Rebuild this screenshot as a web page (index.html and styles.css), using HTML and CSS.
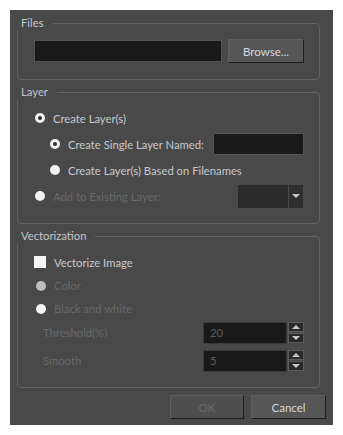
FILE: index.html
```html
<!DOCTYPE html>
<html lang="en">
<head>
    <meta charset="UTF-8">
    <title>Import Images</title>
    <link rel="stylesheet" href="styles.css">
</head>
<body>
    <div class="dialog">
        <!-- Files -->
        <div class="group files-group">
            <span class="group-title">Files</span>
            <div class="files-row">
                <div class="text-field path-field"></div>
                <button class="btn browse-btn">Browse...</button>
            </div>
        </div>

        <!-- Layer -->
        <div class="group layer-group">
            <span class="group-title">Layer</span>
            <div class="row">
                <span class="radio ring"></span>
                <span class="label">Create Layer(s)</span>
            </div>
            <div class="row indent">
                <span class="radio ring"></span>
                <span class="label">Create Single Layer Named:</span>
                <div class="text-field name-field"></div>
            </div>
            <div class="row indent">
                <span class="radio"></span>
                <span class="label">Create Layer(s) Based on Filenames</span>
            </div>
            <div class="row">
                <span class="radio"></span>
                <span class="label disabled">Add to Existing Layer:</span>
                <div class="combo">
                    <div class="combo-box"></div>
                    <div class="combo-arrow"><span class="tri-down"></span></div>
                </div>
            </div>
        </div>

        <!-- Vectorization -->
        <div class="group vector-group">
            <span class="group-title">Vectorization</span>
            <div class="row check-row">
                <span class="checkbox"></span>
                <span class="label">Vectorize Image</span>
            </div>
            <div class="row">
                <span class="radio grey"></span>
                <span class="label disabled">Color</span>
            </div>
            <div class="row">
                <span class="radio"></span>
                <span class="label disabled">Black and white</span>
            </div>
            <div class="row spin-row first-spin">
                <span class="label disabled spin-label">Threshold(%)</span>
                <div class="spin">
                    <div class="spin-field">20</div>
                    <div class="spin-arrows">
                        <div class="spin-btn"><span class="tri-up"></span></div>
                        <div class="spin-btn"><span class="tri-down"></span></div>
                    </div>
                </div>
            </div>
            <div class="row spin-row second-spin">
                <span class="label disabled spin-label">Smooth</span>
                <div class="spin">
                    <div class="spin-field">5</div>
                    <div class="spin-arrows">
                        <div class="spin-btn"><span class="tri-up"></span></div>
                        <div class="spin-btn"><span class="tri-down"></span></div>
                    </div>
                </div>
            </div>
        </div>

        <!-- Dialog buttons -->
        <div class="button-bar">
            <button class="btn dialog-btn disabled-btn">OK</button>
            <button class="btn dialog-btn">Cancel</button>
        </div>
    </div>
</body>
</html>
```

FILE: styles.css
```css
body {
    margin: 0;
    padding: 10px;
    background-color: #fff;
    font-family: Lato, "Noto Sans", sans-serif;
    font-size: 11.25px;
}
.dialog {
    width: 323px;
    height: 415px;
    box-sizing: border-box;
    background-color: #494949;
    padding: 13px 13px 0 7px;
    display: flex;
    flex-direction: column;
}
.group {
    position: relative;
    box-sizing: border-box;
    border: 1px solid #636363;
    border-radius: 4px;
}
.group-title {
    position: absolute;
    top: -9px;
    left: -2px;
    background-color: #494949;
    color: #c4c6cc;
    padding: 0 9px 0 5px;
    line-height: 16px;
}
.files-group {
    height: 57px;
    padding: 15px 15px 0 16px;
}
.files-row {
    display: flex;
    justify-content: space-between;
    align-items: center;
}
.text-field {
    box-sizing: border-box;
    background-color: #191919;
    border: 1px solid #555;
    height: 22px;
}
.path-field {
    width: 188px;
}
.btn {
    box-sizing: border-box;
    font-family: inherit;
    font-size: 11.5px;
    color: #d4d6dc;
    background-color: #565656;
    border: 1px solid #5f5f5f;
    border-right-color: #1e1e1e;
    border-bottom-color: #1e1e1e;
    padding: 0;
}
.browse-btn {
    width: 76px;
    height: 24px;
}
.layer-group {
    height: 132px;
    margin-top: 12px;
    padding: 12px 15px 0 17px;
}
.row {
    display: flex;
    align-items: center;
    height: 26px;
    color: #c8cad2;
}
.row.indent {
    padding-left: 15px;
}
.label {
    margin-left: 8px;
    white-space: nowrap;
}
.label.disabled {
    color: #686868;
}
.radio {
    box-sizing: border-box;
    width: 10px;
    height: 10px;
    border-radius: 50%;
    background-color: #f2f2f2;
    flex-shrink: 0;
}
.radio.ring {
    background-color: #2b2b2b;
    border: 3px solid #f2f2f2;
}
.radio.grey {
    background-color: #bdbdbd;
}
.name-field {
    width: 91px;
    height: 22px;
    margin-left: auto;
}
.combo {
    display: flex;
    margin-left: auto;
    margin-right: 1px;
    height: 23px;
    gap: 1px;
}
.combo-box {
    width: 50px;
    background-color: #2b2b2b;
}
.combo-arrow {
    width: 14px;
    background-color: #2e2e2e;
    display: flex;
    align-items: center;
    justify-content: center;
}
.tri-down {
    width: 0;
    height: 0;
    border-left: 4px solid transparent;
    border-right: 4px solid transparent;
    border-top: 4px solid #c8c8c8;
}
.tri-up {
    width: 0;
    height: 0;
    border-left: 4px solid transparent;
    border-right: 4px solid transparent;
    border-bottom: 4px solid #c8c8c8;
}
.vector-group {
    height: 152px;
    margin-top: 12px;
    padding: 13px 15px 0 16px;
}
.vector-group .row {
    height: 23px;
    padding-left: 2px;
}
.vector-group .check-row {
    height: 24px;
    padding-left: 0;
}
.checkbox {
    width: 12px;
    height: 12px;
    background-color: #f5f5f5;
    flex-shrink: 0;
}
.vector-group .spin-row {
    padding-left: 1px;
}
.first-spin {
    margin-top: 1px;
}
.second-spin {
    margin-top: 5px;
}
.spin-label {
    margin-left: 8px;
}
.spin {
    display: flex;
    margin-left: auto;
    gap: 1px;
}
.spin-field {
    box-sizing: border-box;
    width: 84px;
    height: 22px;
    background-color: #191919;
    border: 1px solid #3a3a3a;
    color: #5e5e5e;
    padding-left: 6px;
    line-height: 20px;
}
.spin-arrows {
    display: flex;
    flex-direction: column;
    gap: 1px;
}
.spin-btn {
    box-sizing: border-box;
    width: 16px;
    height: 10px;
    background-color: #2a2a2a;
    border: 1px solid #5a5a5a;
    display: flex;
    align-items: center;
    justify-content: center;
}
.button-bar {
    display: flex;
    justify-content: flex-end;
    gap: 7px;
    margin-top: 7px;
    margin-right: -6px;
}
.dialog-btn {
    width: 75px;
    height: 24px;
}
.disabled-btn {
    width: 74px;
    color: #666;
    background-color: #4e4e4e;
}
```
